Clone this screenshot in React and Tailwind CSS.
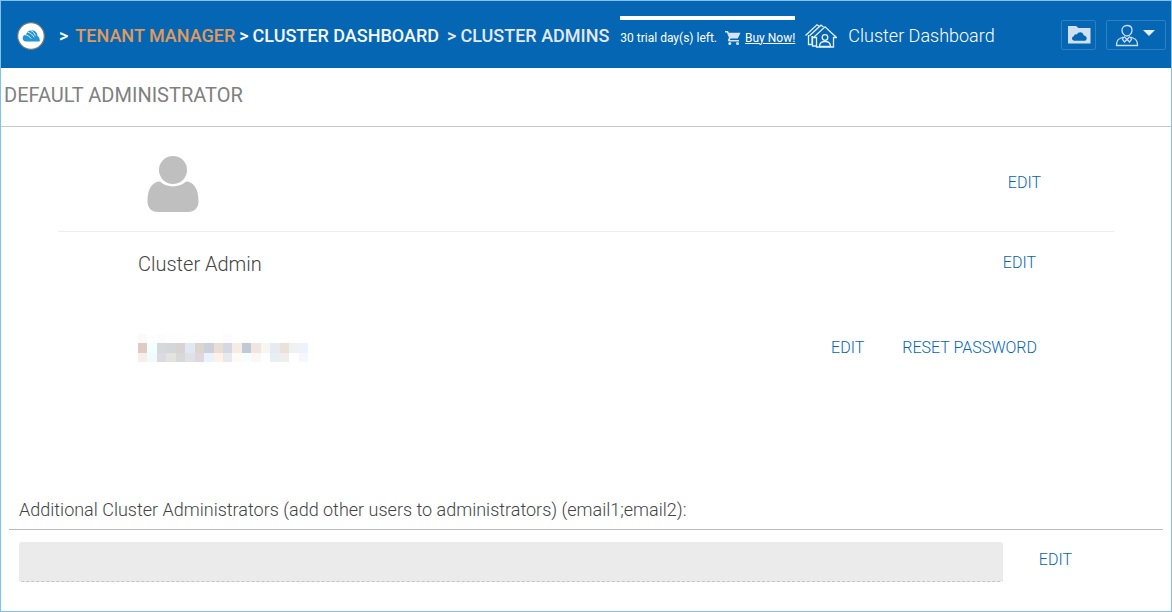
import React, { useState } from 'react';

const MASK_ROWS = [
  ['#fbfafa', '#ffffff', '#fcfcfc', '#fefefe', '#fefefe', '#ffffff', '#fefefe', '#ffffff', '#ffffff', '#fafcff', '#ffffff', '#ffffff', '#ffffff', '#ffffff', '#ffffff', '#ffffff', '#ffffff', '#ffffff'],
  ['#e0cbc3', '#f0ffff', '#d6d7df', '#d3d7da', '#d8d2d2', '#e0e9f1', '#dbd5d0', '#cbd0da', '#eaddd4', '#d5d8e2', '#f6ebe5', '#bfcad6', '#efe6e1', '#f7f6f2', '#e6ebf0', '#eae2d8', '#f0f2f2', '#edf3fd'],
  ['#f8eee9', '#f1faff', '#dbdae0', '#e0e4dc', '#d6d8da', '#dfe1e4', '#ded8de', '#eaf2fb', '#fef2e7', '#e8e9ee', '#fffaf5', '#f7feff', '#fcf7f4', '#ffffff', '#e9eef4', '#f0eee9', '#ffffff', '#f4f8fd'],
];

function LogoIcon() {
  return (
    <svg className="size-7" viewBox="0 0 28 28" aria-hidden="true">
      <circle cx="14" cy="14" r="13.3" fill="#fff" stroke="#6f7c78" strokeWidth="1.2" />
      <path d="M9 19.500C7 19.500 5.600 18 5.700 16c.1-2 1.500-3.200 3.300-3.200C9.500 10 12 8.200 15 8.300c3.300.1 5.300 2.500 5.500 5.700 1.500.8 2.300 2 2.300 5.500z" fill="#2494d3" />
      <path d="M8 12.800c2.500.2 4.600 1.600 6.200 3.800M10.500 10.300c3 .3 5.200 2.300 6.500 5M13.300 8.500c2.700.6 4.300 2.700 5 5.300" fill="none" stroke="#fff" strokeWidth=".8" />
    </svg>
  );
}

function CartIcon() {
  return (
    <svg className="size-4" viewBox="0 0 16 16" fill="#d5e4f2" aria-hidden="true">
      <path d="M0 1h3l.8 1.7h11.7l-2.7 5.8H5.5L4.8 10H14v1.5H4q-1.8-.4-1-2l1-1.7-2.1-5.4H0z" />
      <circle cx="4.8" cy="13.5" r="1.5" />
      <circle cx="12.5" cy="13.5" r="1.5" />
    </svg>
  );
}

function HousesIcon() {
  return (
    <svg className="h-6 w-8 shrink-0" viewBox="0 0 32 24" fill="none" stroke="#e4eef7" strokeWidth="1.3" aria-hidden="true">
      <path d="M.5 11.5 12 .8l2.5 1.7M4.5 11.8 16 1.2 18.500 3" />
      <path d="M3.500 11v9.500H7V12M7.500 12v10H12" />
      <path d="M8.500 13.500 20 2.800l11.500 10.700h-3V23h-17v-9.500z" />
      <circle cx="20" cy="13.500" r="2.800" />
      <path d="M14.500 22.500c0-3.500 2-5 5.500-5s5.500 1.500 5.500 5z" />
    </svg>
  );
}

function FolderCloudIcon() {
  return (
    <svg className="h-5 w-6" viewBox="0 0 24 20" aria-hidden="true">
      <path d="M1 1h8l2.500 2h12v15.500H1z" fill="#cfe1f1" />
      <path d="M7.500 15.800c-3 0-3.400-4-.6-4.500.2-1.800 1.600-2.500 3-1.900 1.500-3.300 6.300-2.800 6.800 1 4 .3 3.900 5.400.5 5.400z" fill="#0566b3" />
    </svg>
  );
}

function PersonIcon() {
  return (
    <svg className="h-6 w-6" viewBox="0 0 24 24" fill="none" stroke="#c9def0" strokeWidth="1.3" aria-hidden="true">
      <path d="M12 1.500c3.200 0 5 2 5 4.800S14.800 12 12 12 7 9.100 7 6.300s1.800-4.800 5-4.800z" />
      <path d="M8.500 13 5 14.500c-2.500 1-3.500 3-3.500 7h21c0-4-1-6-3.500-7L15.500 13" />
      <path d="M8.500 13 7.500 15.500l2 2.500L12 15.500l2.500 2.500 2-2.500-1-2.500M9 12.500l3 3 3-3" />
    </svg>
  );
}

function Avatar() {
  return (
    <svg className="h-14 w-13" viewBox="0 0 52 56" fill="#bfbfbf" role="img" aria-label="Profile picture">
      <circle cx="26" cy="14" r="14" />
      <path d="M13 25.500c7 6.500 19 6.500 26 0 8 0 12.500 8 12.500 19.500 0 7-4 11-10.500 11H11C4.500 56 .5 52 .5 45 .5 33.500 5 25.500 13 25.500z" />
    </svg>
  );
}

function MaskedEmail() {
  return (
    <svg className="h-7 w-[170px]" viewBox="0 0 18 3" preserveAspectRatio="none" shapeRendering="crispEdges" role="img" aria-label="Hidden email">
      {MASK_ROWS.map((row, y) =>
        row.map((fill, x) => <rect key={`${x}-${y}`} x={x} y={y} width="1" height="1" fill={fill} />)
      )}
    </svg>
  );
}

function ActionButton({ children, onClick }) {
  return (
    <button type="button" onClick={onClick} className="text-base leading-5 font-light whitespace-nowrap text-[#0566b3] hover:underline">
      {children}
    </button>
  );
}

export default function App() {
  const [emails, setEmails] = useState('');
  const [editing, setEditing] = useState(false);

  return (
    <div className="min-h-screen border border-[#80c1f0] bg-white font-['Roboto',sans-serif] text-[#444]">
      <header className="flex h-[67px] items-center bg-[#0566b3] pt-[2px] pr-[5px] pl-4 text-white">
        <a href="#home" aria-label="Home" className="shrink-0">
          <LogoIcon />
        </a>

        <nav className="ml-[14px] flex gap-1 text-lg leading-6 font-medium whitespace-nowrap">
          <span>&gt;</span>
          <a href="#tenants" className="ml-[3px] text-[#e09a5c]">TENANT MANAGER</a>
          <span>&gt;</span>
          <a href="#dashboard" className="text-[#f4f6f8]">CLUSTER DASHBOARD</a>
          <span className="ml-1 text-[#e3e9ef]">&gt;</span>
          <a href="#admins" className="text-[#e3e9ef]">CLUSTER ADMINS</a>
        </nav>

        {/* Trial notice */}
        <div className="mb-[10px] ml-[11px] border-t-4 border-white pt-[10px] text-xs whitespace-nowrap">
          <div className="flex items-center gap-1">
            <span>30 trial day(s) left.</span>
            <span className="ml-1"><CartIcon /></span>
            <a href="#buy" className="underline">Buy Now!</a>
          </div>
        </div>

        <div className="ml-[10px] flex items-center gap-[11px]">
          <HousesIcon />
          <span className="pt-px text-lg font-light whitespace-nowrap">Cluster Dashboard</span>
        </div>

        <div className="mb-[2px] ml-auto flex gap-[10px]">
          <button type="button" aria-label="Cloud files" className="flex h-[30px] w-[35px] items-center justify-center rounded-xs border border-[#2f80c2]">
            <FolderCloudIcon />
          </button>
          <button type="button" aria-label="Account menu" className="flex h-[30px] w-[60px] items-start justify-center gap-1 rounded-xs border border-[#2f80c2] pt-[3px] pr-[2px]">
            <PersonIcon />
            <svg className="mt-[6px] h-[6px] w-3" viewBox="0 0 12 6" fill="#e4eef7" aria-hidden="true">
              <path d="M0 0h12L6 6z" />
            </svg>
          </button>
        </div>
      </header>

      <main>
        <h1 className="border-b border-[#c8c8c8] pt-[13px] pb-[17px] pl-[3px] text-xl text-[#808080]">DEFAULT ADMINISTRATOR</h1>

        <section className="mx-[57px]">
          <div className="flex items-start justify-between border-b border-[#eee] pt-[29px] pr-[73px] pb-[19px] pl-[89px]">
            <Avatar />
            <div className="pt-[15px]">
              <ActionButton>EDIT</ActionButton>
            </div>
          </div>
          <div className="flex items-start justify-between pt-[18px] pr-[78px] pl-20">
            <span className="text-xl font-light">Cluster Admin</span>
            <div className="pt-px">
              <ActionButton>EDIT</ActionButton>
            </div>
          </div>
          <div className="flex items-start justify-between pt-14 pr-[77px] pl-20">
            <MaskedEmail />
            <div className="flex gap-[38px] pt-1">
              <ActionButton>EDIT</ActionButton>
              <ActionButton>RESET PASSWORD</ActionButton>
            </div>
          </div>
        </section>

        <section className="mx-2 mt-[134px]">
          <label htmlFor="admins" className="block border-b border-[#bcbcbc] pb-[5px] pl-[10px] text-lg font-light">
            Additional Cluster Administrators (add other users to administrators) (email1;email2):
          </label>
          <div className="flex items-start gap-9 pt-3 pr-[91px] pl-[10px]">
            <input
              id="admins"
              type="text"
              value={emails}
              onChange={(e) => setEmails(e.target.value)}
              readOnly={!editing}
              className="h-10 min-w-0 flex-1 rounded-[3px] border-b border-dashed border-[#c4c4c4] bg-[#ebebeb] px-3"
            />
            <div className="pt-[6px]">
              <ActionButton onClick={() => setEditing(!editing)}>EDIT</ActionButton>
            </div>
          </div>
        </section>
      </main>
    </div>
  );
}
